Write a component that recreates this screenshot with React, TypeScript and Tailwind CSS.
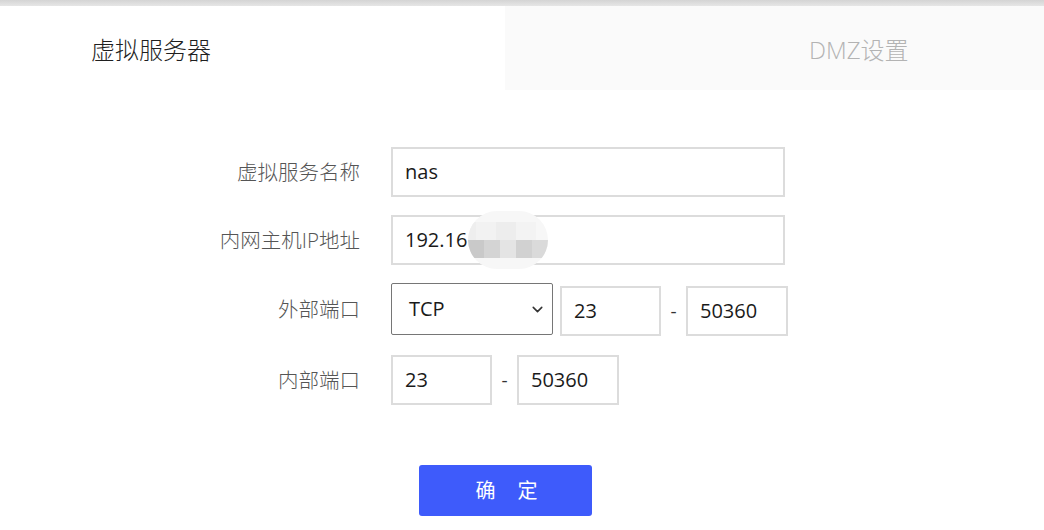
import { ChevronDown } from 'lucide-react'

const font = 'font-["Segoe_UI","Open_Sans","Noto_Sans_CJK_SC",sans-serif]'

function Field({ value, width, children }: { value: string; width: string; children?: React.ReactNode }) {
  return (
    <div className={`relative h-[50px] ${width} border-2 border-[#dcdcdc] bg-white flex items-center pl-[12px] text-[20px] text-[#1a1a1a]`}>
      {value}
      {children}
    </div>
  )
}

function Row({ label, className, children }: { label: string; className?: string; children: React.ReactNode }) {
  return (
    <div className={`flex items-center ${className ?? ''}`}>
      <div className="w-[361px] pr-[1px] text-right text-[20.5px] font-light text-[#555]">{label}</div>
      <div className="ml-[30px] flex items-center">{children}</div>
    </div>
  )
}

function Dash() {
  return <div className="w-[25px] text-center text-[19px] text-[#333]">-</div>
}

export default function App() {
  return (
    <div className={`w-[1044px] h-[530px] bg-white overflow-hidden ${font}`}>
      <div className="h-[6px] bg-gradient-to-b from-[#d4d4d4] to-[#e6e6e6]" />

      <div className="flex h-[84px]">
        <div className="w-[505px] flex items-center pl-[91px] pt-[4px] text-[24px] font-light text-[#1f1f1f]">虚拟服务器</div>
        <div className="flex-1 bg-[#fafafa] flex items-center pl-[304px] pt-[4px] text-[24px] font-light text-[#b3b3b3]">DMZ设置</div>
      </div>

      <div className="pt-[57px]">
        <Row label="虚拟服务名称">
          <Field value="nas" width="w-[394px]" />
        </Row>

        <Row label="内网主机IP地址" className="mt-[18px]">
          <Field value="192.16" width="w-[394px]">
            <div className="absolute left-[75px] top-[-6px] w-[80px] h-[58px] rounded-[30px] bg-[#f7f7f7] overflow-hidden flex flex-col justify-center">
              <div className="flex h-[18px]">
                <div className="w-[8px] bg-[#eeeeee]" />
                <div className="w-[20px] bg-[#f2f2f2]" />
                <div className="w-[20px] bg-[#ededed]" />
                <div className="w-[20px] bg-[#f3f3f3]" />
              </div>
              <div className="flex h-[18px]">
                <div className="w-[16px] bg-[#c9c9c9]" />
                <div className="w-[16px] bg-[#d4d4d4]" />
                <div className="w-[16px] bg-[#e4e4e4]" />
                <div className="w-[16px] bg-[#d1d1d1]" />
                <div className="w-[16px] bg-[#dadada]" />
              </div>
            </div>
          </Field>
        </Row>

        <Row label="外部端口" className="mt-[17px]">
          <div className="h-[52px] w-[162px] border border-[#767676] rounded-[2px] bg-white flex items-center justify-between pl-[17px] pr-[6px] text-[20px] text-[#1a1a1a]">
            TCP
            <ChevronDown size={17} strokeWidth={2.2} className="text-[#333]" />
          </div>
          <div className="ml-[7px] mt-[4px] flex items-center">
            <Field value="23" width="w-[101px]" />
            <Dash />
            <Field value="50360" width="w-[102px]" />
          </div>
        </Row>

        <Row label="内部端口" className="mt-[19px]">
          <Field value="23" width="w-[101px]" />
          <Dash />
          <Field value="50360" width="w-[102px]" />
        </Row>

        <div className="mt-[60px] ml-[419px]">
          <button className="w-[173px] h-[51px] rounded-[3px] bg-[#3e5bfb] text-white text-[20px] tracking-[1.1em] pl-[24px]">
            确定
          </button>
        </div>
      </div>
    </div>
  )
}
